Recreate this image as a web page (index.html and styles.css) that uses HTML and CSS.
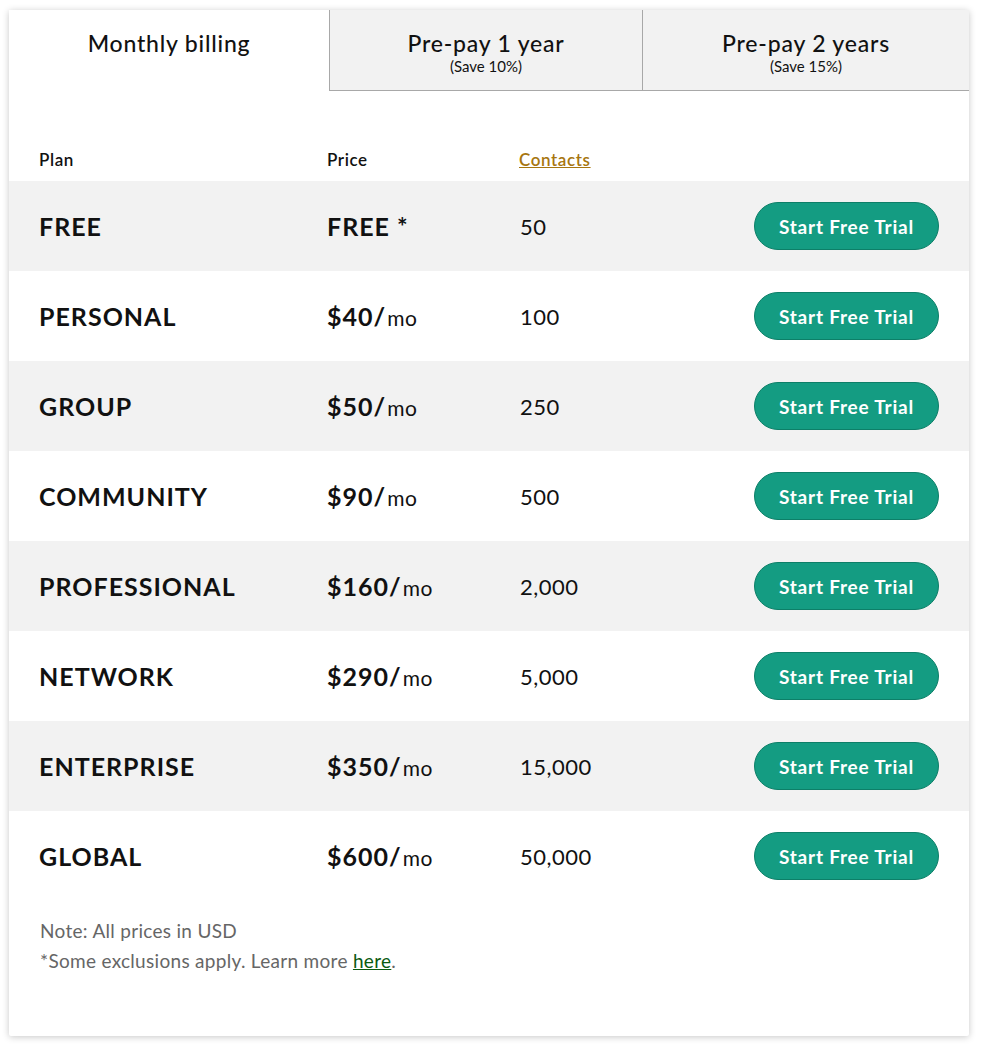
FILE: index.html
```html
<!DOCTYPE html>
<html>
<head>
<meta charset="utf-8">
<link rel="stylesheet" href="styles.css">
</head>
<body>
<div class="card">
  <div class="tabs">
    <div class="tab active"><div class="tab-title">Monthly billing</div></div>
    <div class="tab"><div class="tab-title">Pre-pay 1 year</div><div class="tab-sub">(Save 10%)</div></div>
    <div class="tab last"><div class="tab-title">Pre-pay 2 years</div><div class="tab-sub">(Save 15%)</div></div>
  </div>
  <div class="table">
    <div class="row head">
      <div>Plan</div><div>Price</div><div><a class="contacts-link" href="#">Contacts</a></div><div></div>
    </div>
    <div class="row alt"><div class="plan">FREE</div><div class="price">FREE *</div><div class="count">50</div><div class="act"><a class="btn" href="#">Start Free Trial</a></div></div>
    <div class="row"><div class="plan">PERSONAL</div><div class="price">$40/<span class="mo">mo</span></div><div class="count">100</div><div class="act"><a class="btn" href="#">Start Free Trial</a></div></div>
    <div class="row alt"><div class="plan">GROUP</div><div class="price">$50/<span class="mo">mo</span></div><div class="count">250</div><div class="act"><a class="btn" href="#">Start Free Trial</a></div></div>
    <div class="row"><div class="plan">COMMUNITY</div><div class="price">$90/<span class="mo">mo</span></div><div class="count">500</div><div class="act"><a class="btn" href="#">Start Free Trial</a></div></div>
    <div class="row alt"><div class="plan">PROFESSIONAL</div><div class="price">$160/<span class="mo">mo</span></div><div class="count">2,000</div><div class="act"><a class="btn" href="#">Start Free Trial</a></div></div>
    <div class="row"><div class="plan">NETWORK</div><div class="price">$290/<span class="mo">mo</span></div><div class="count">5,000</div><div class="act"><a class="btn" href="#">Start Free Trial</a></div></div>
    <div class="row alt"><div class="plan">ENTERPRISE</div><div class="price">$350/<span class="mo">mo</span></div><div class="count">15,000</div><div class="act"><a class="btn" href="#">Start Free Trial</a></div></div>
    <div class="row"><div class="plan">GLOBAL</div><div class="price">$600/<span class="mo">mo</span></div><div class="count">50,000</div><div class="act"><a class="btn" href="#">Start Free Trial</a></div></div>
  </div>
  <div class="notes">
    <p>Note: All prices in USD</p>
    <p>*Some exclusions apply. Learn more <a class="here" href="#">here</a>.</p>
  </div>
</div>
</body>
</html>
```

FILE: styles.css
```css
html, body {
  margin: 0;
  padding: 0;
  background: #ffffff;
}
body {
  font-family: "Lato", "Noto Sans", sans-serif;
  color: #111;
  padding: 10px 13px 12px 9px;
}
.card {
  width: 960px;
  height: 1026px;
  background: #fff;
  box-shadow: 0 1px 7px rgba(0,0,0,0.22);
  border-radius: 2px;
  box-sizing: border-box;
}
.tabs {
  display: grid;
  grid-template-columns: 320px 313px 327px;
  height: 81px;
}
.tab {
  background: #f2f2f2;
  border-left: 1px solid #a8a8a8;
  border-bottom: 1px solid #a8a8a8;
  display: flex;
  flex-direction: column;
  align-items: center;
  padding-top: 19px;
  box-sizing: border-box;
}
.tab.active {
  background: #fff;
  border: none;
}
.tab-title {
  font-size: 23px;
  font-weight: 500;
  line-height: 28px;
  letter-spacing: 0.8px;
}
.tab-sub {
  font-size: 15px;
  line-height: 16px;
  margin-top: 1px;
}
.table {
  margin-top: 50px;
}
.row {
  display: grid;
  grid-template-columns: 288px 192px 1fr 200px;
  height: 90px;
  align-items: center;
  padding: 0 30px;
}
.row.alt {
  background: #f2f2f2;
}
.row.head {
  height: 40px;
  align-items: start;
  font-size: 17px;
  font-weight: 600;
  line-height: 38px;
  letter-spacing: 0.6px;
}
.contacts-link {
  color: #a7760f;
  text-decoration: underline;
}
.plan, .price {
  font-size: 25px;
  font-weight: 700;
  letter-spacing: 1px;
}
.mo {
  font-size: 21px;
  font-weight: 400;
  letter-spacing: 0.5px;
  margin-left: 1px;
}
.count {
  font-size: 22px;
  letter-spacing: 0.5px;
  padding-left: 1px;
}
.act {
  display: flex;
  justify-content: flex-end;
}
.btn {
  display: flex;
  align-items: center;
  justify-content: center;
  width: 185px;
  height: 48px;
  box-sizing: border-box;
  border-radius: 24px;
  background: #149c82;
  border: 1px solid #0d7f68;
  color: #fff;
  text-decoration: none;
  font-size: 19px;
  font-weight: 700;
  letter-spacing: 0.8px;
}
.notes {
  padding: 15px 31px 0;
  color: #666;
  font-size: 19px;
  letter-spacing: 0.3px;
}
.notes p {
  margin: 0;
  line-height: 30px;
}
.here {
  color: #0a5a10;
  text-decoration: underline;
}
```
